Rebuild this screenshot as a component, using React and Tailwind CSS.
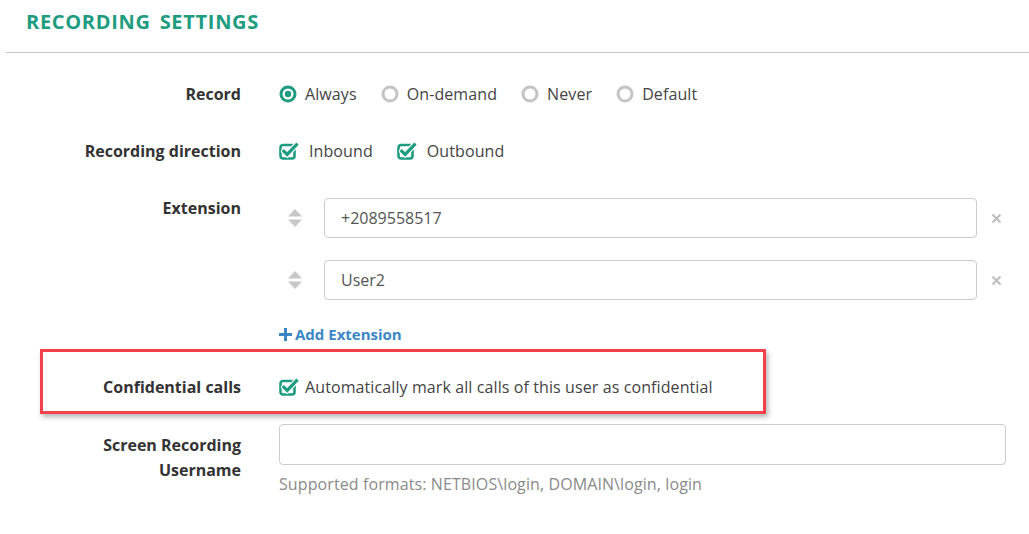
import { useState } from "react";

const TEAL = "#1e9c80";

function Radio({ checked }) {
  return (
    <svg width="18" height="18" viewBox="0 0 18 18" className="shrink-0">
      <circle
        cx="9"
        cy="9"
        r="7"
        fill="none"
        stroke={checked ? TEAL : "#c4c4c4"}
        strokeWidth="3"
      />
      {checked && <circle cx="9" cy="9" r="3.2" fill={TEAL} />}
    </svg>
  );
}

function Check() {
  return (
    <svg width="20" height="18" viewBox="0 0 20 18" className="shrink-0">
      <rect
        x="1.5"
        y="3"
        width="14"
        height="13.5"
        rx="2.5"
        fill="none"
        stroke={TEAL}
        strokeWidth="2.6"
      />
      <path
        d="M4.8 9.2 L8.2 12.4 L17.4 2.8"
        fill="none"
        stroke="#fff"
        strokeWidth="5.6"
        strokeLinecap="round"
      />
      <path
        d="M4.8 9.2 L8.2 12.4 L17.4 2.8"
        fill="none"
        stroke={TEAL}
        strokeWidth="3.2"
        strokeLinecap="square"
      />
    </svg>
  );
}

function Sorter() {
  return (
    <svg width="16" height="20" viewBox="0 0 16 20">
      <path d="M8 1 L15 8.5 H1 Z" fill="#c8c8c8" />
      <path d="M8 19 L15 11.5 H1 Z" fill="#c8c8c8" />
    </svg>
  );
}

function Remove() {
  return (
    <svg width="11" height="11" viewBox="0 0 11 11">
      <path d="M1.5 1.5 L9.5 9.5 M9.5 1.5 L1.5 9.5" stroke="#bdbdbd" strokeWidth="2" />
    </svg>
  );
}

function Label({ children, width = "w-[241px]", className = "" }) {
  return (
    <div
      className={`${width} shrink-0 text-right text-[16px] font-bold text-[#333] leading-6 ${className}`}
    >
      {children}
    </div>
  );
}

export default function App() {
  const [record, setRecord] = useState("always");
  const extensions = ["+2089558517", "User2"];

  return (
    <div
      className="w-[1029px] h-[534px] bg-white overflow-hidden"
      style={{ fontFamily: '"Open Sans", "Liberation Sans", sans-serif' }}
    >
      {/* Header */}
      <div className="ml-[6px] h-[53px] border-b border-[#c3c7cb] pl-[20px] pt-[8px]">
        <h2 className="text-[20px] font-bold tracking-[0.7px] leading-[28px] text-[#1e9c80] [word-spacing:3px]">
          RECORDING SETTINGS
        </h2>
      </div>

      {/* Record */}
      <div className="flex items-center mt-[29px] h-6">
        <Label>Record</Label>
        <div className="flex items-center ml-[38px] gap-[24px] text-[16px] tracking-[0.1px] text-[#444]">
          {[
            ["always", "Always"],
            ["ondemand", "On-demand"],
            ["never", "Never"],
            ["default", "Default"],
          ].map(([k, l]) => (
            <button
              key={k}
              onClick={() => setRecord(k)}
              className="flex items-center gap-[8px]"
            >
              <Radio checked={record === k} />
              <span>{l}</span>
            </button>
          ))}
        </div>
      </div>

      {/* Recording direction */}
      <div className="flex items-center mt-[33px] h-6">
        <Label>Recording direction</Label>
        <div className="flex items-center ml-[38px] gap-[24px] text-[16px] tracking-[0.1px] text-[#444]">
          <div className="flex items-center gap-[10px]">
            <Check />
            <span>Inbound</span>
          </div>
          <div className="flex items-center gap-[10px]">
            <Check />
            <span>Outbound</span>
          </div>
        </div>
      </div>

      {/* Extension */}
      <div className="flex mt-[33px]">
        <Label>Extension</Label>
        <div className="ml-[38px] w-[727px] pt-[2px]">
          <div className="flex flex-col gap-[22px]">
            {extensions.map((e) => (
              <div key={e} className="flex items-center">
                <div className="w-[45px] pl-[8px] flex items-center">
                  <Sorter />
                </div>
                <div className="flex-1 h-[40px] border border-[#cccccc] rounded-[4px] flex items-center px-[16px] text-[16px] text-[#555]">
                  {e}
                </div>
                <div className="w-[29px] pl-[14px] flex items-center">
                  <Remove />
                </div>
              </div>
            ))}
          </div>
          <div className="mt-[22px] flex items-center gap-[3px] text-[15px] font-bold text-[#3b87c6] leading-6">
            <svg width="13" height="13" viewBox="0 0 13 13">
              <path d="M5 0 H8 V5 H13 V8 H8 V13 H5 V8 H0 V5 H5 Z" fill="#3b87c6" />
            </svg>
            <span>Add Extension</span>
          </div>
        </div>
      </div>

      {/* Confidential calls (highlighted) */}
      <div className="ml-[40px] mt-[3px] w-[726px] h-[65px] border-[3px] border-[#f2414a] shadow-[2px_3px_5px_rgba(0,0,0,0.3)] flex items-center pt-[10px]">
        <Label width="w-[198px]">Confidential calls</Label>
        <div className="ml-[38px] flex items-center gap-[6px] text-[16px] tracking-[0.1px] text-[#444]">
          <Check />
          <span>Automatically mark all calls of this user as confidential</span>
        </div>
      </div>

      {/* Screen Recording Username */}
      <div className="flex mt-[10px]">
        <Label className="pt-[9px] leading-[25px]">
          Screen Recording
          <br />
          Username
        </Label>
        <div className="ml-[38px] w-[727px]">
          <div className="h-[41px] border border-[#cccccc] rounded-[4px]" />
          <div className="mt-[7px] text-[16px] tracking-[0.1px] text-[#8a8a8a] leading-6">
            Supported formats: NETBIOS\login, DOMAIN\login, login
          </div>
        </div>
      </div>
    </div>
  );
}
